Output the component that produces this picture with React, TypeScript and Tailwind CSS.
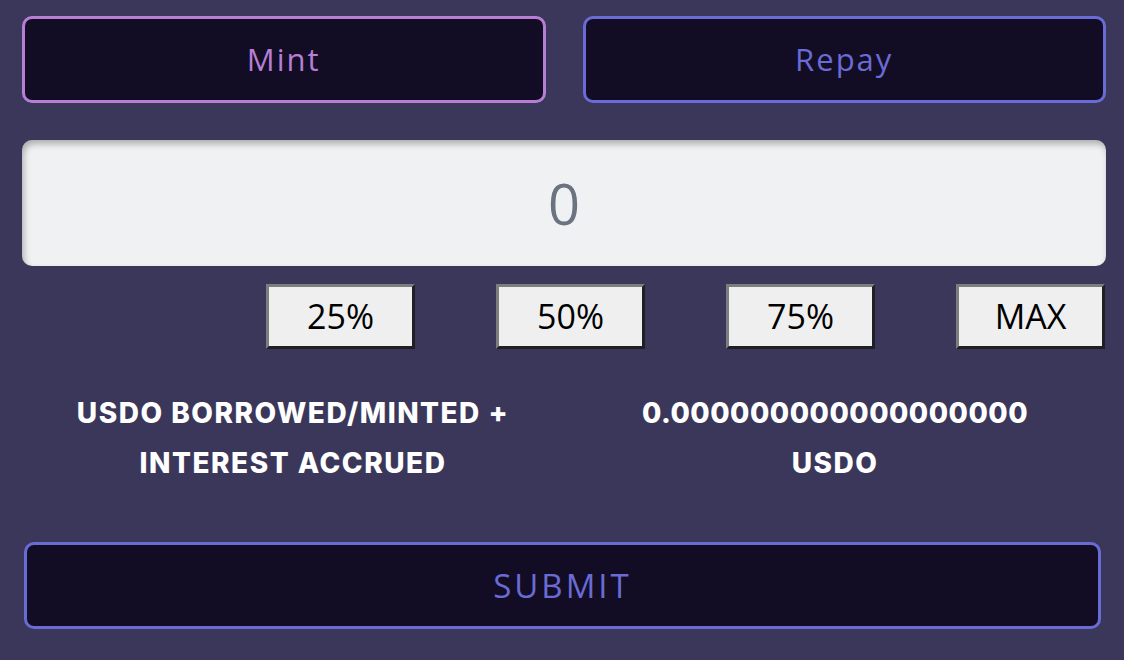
import React, { useState } from "react";

const presets = ["25%", "50%", "75%", "MAX"];

export default function App() {
  const [mode, setMode] = useState<"mint" | "repay">("mint");
  const [amount, setAmount] = useState("");

  return (
    <div className="w-[1124px] h-[660px] overflow-hidden bg-[#3b375b] pl-[22px] pr-[18px] pt-[16px] font-['Open_Sans',sans-serif]">
      {/* Mint / Repay toggle */}
      <div className="grid grid-cols-2 gap-[37px]">
        <button
          onClick={() => setMode("mint")}
          className="h-[87px] rounded-[10px] border-[3px] border-[#b67fd5] bg-[#120d24] text-[31px] font-medium tracking-[2px] text-[#b67fd5]"
        >
          Mint
        </button>
        <button
          onClick={() => setMode("repay")}
          className="h-[87px] rounded-[10px] border-[3px] border-[#6a6bd5] bg-[#120d24] text-[31px] font-medium tracking-[2px] text-[#6a6bd5]"
        >
          Repay
        </button>
      </div>

      {/* amount input */}
      <input
        value={amount}
        onChange={(e) => setAmount(e.target.value)}
        placeholder="0"
        className="mt-[37px] block h-[126px] w-full rounded-[10px] bg-[#f0f1f3] text-center text-[56px] text-[#6b7280] placeholder:text-[#6b7280] shadow-[inset_2px_4px_6px_rgba(0,0,0,0.28)] outline-none"
      />

      <div className="mt-[18px] flex justify-end gap-[81px] pr-[1px]">
        {presets.map((p) => (
          <button
            key={p}
            className="h-[65px] w-[149px] border-[3px] border-t-[#7d7d80] border-l-[#7d7d80] border-b-[#1f1f24] border-r-[#1f1f24] bg-[#efefef] text-[34px] text-black"
          >
            {p}
          </button>
        ))}
      </div>

      {/* borrowed summary */}
      <div className="mt-[39px] grid grid-cols-2 font-['Inter',sans-serif] text-[28px] font-extrabold leading-[50px] tracking-[1.5px] text-white">
        <div className="text-center">
          USDO BORROWED/MINTED +<br />
          INTEREST ACCRUED
        </div>
        <div className="text-center">
          <span className="tracking-[0.5px]">0.000000000000000000</span>
          <br />
          USDO
        </div>
      </div>

      <button className="mt-[54px] ml-[2px] block h-[87px] w-[1077px] rounded-[10px] border-[3px] border-[#6a6bd5] bg-[#120d24] text-[33px] font-medium tracking-[3px] text-[#6a6bd5]">
        SUBMIT
      </button>
    </div>
  );
}
